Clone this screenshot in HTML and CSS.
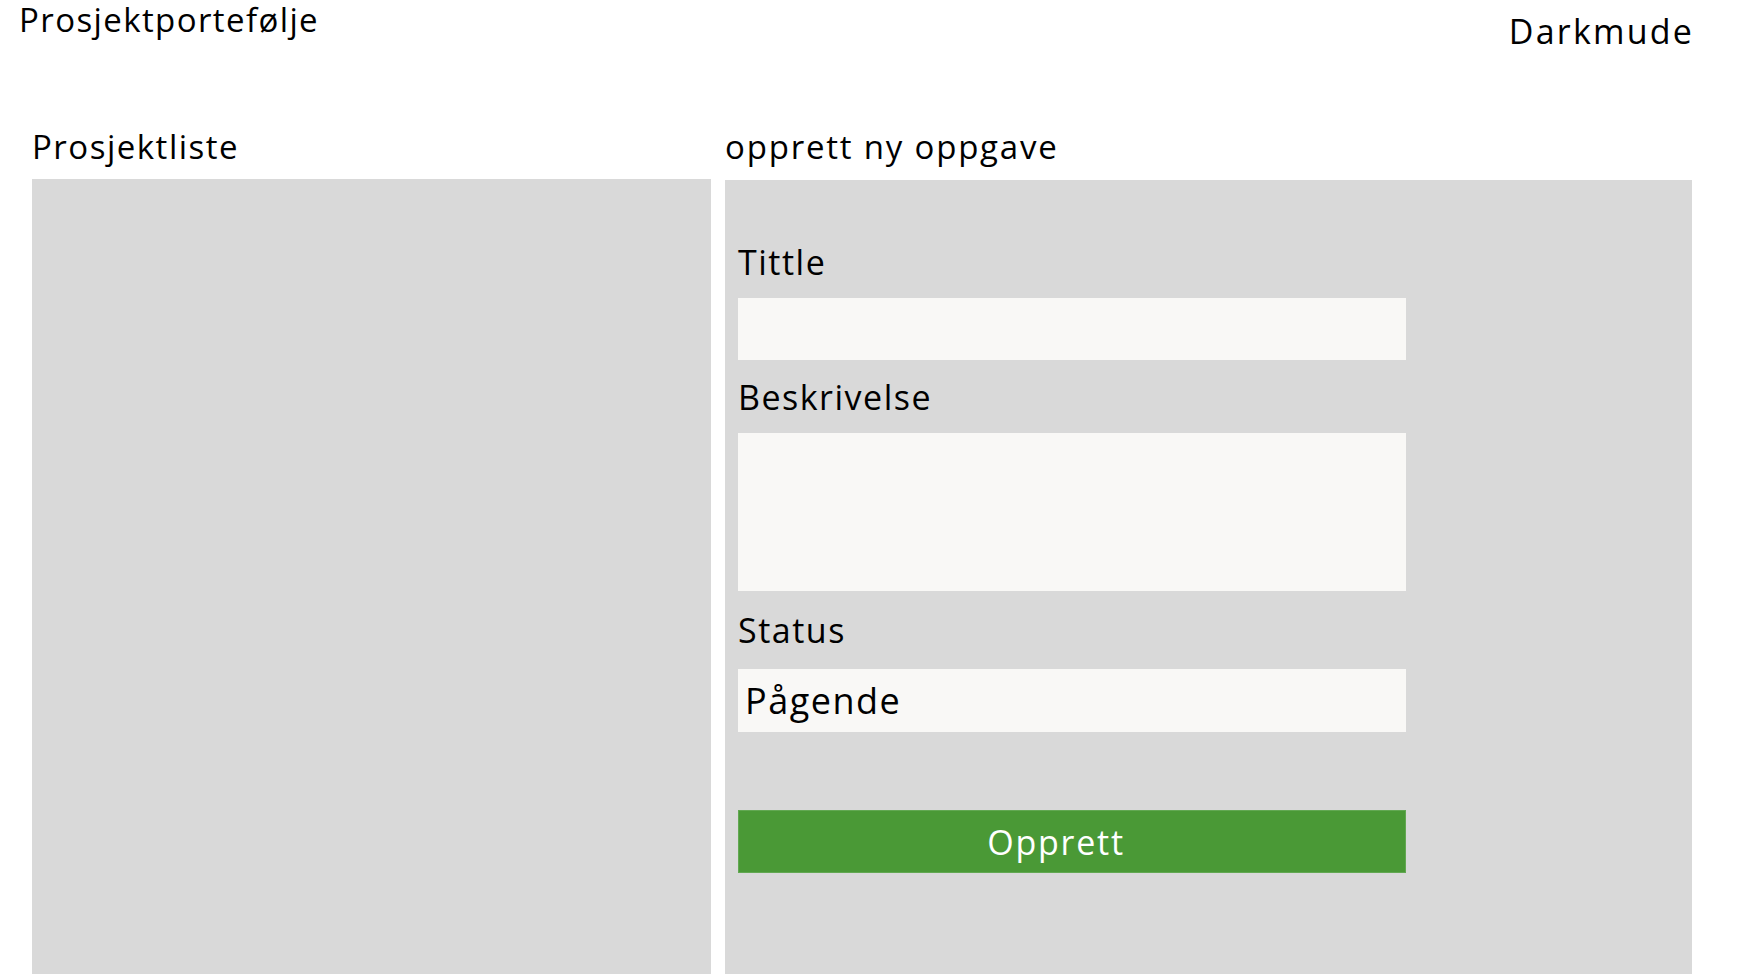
FILE: index.html
```html
<!DOCTYPE html>
<html lang="no">
<head>
<meta charset="utf-8">
<title>Prosjektportefølje</title>
<link rel="stylesheet" href="styles.css">
</head>
<body>
<header class="topbar">
  <h1 class="app-title">Prosjektportefølje</h1>
  <button class="mode-toggle" type="button">Darkmude</button>
</header>
<main class="workspace">
  <section class="column column-list">
    <h2 class="column-heading">Prosjektliste</h2>
    <div class="panel"></div>
  </section>
  <section class="column column-form">
    <h2 class="column-heading column-heading-form">opprett ny oppgave</h2>
    <div class="panel panel-form">
      <form class="task-form">
        <div class="field">
          <label class="field-label" for="tittle">Tittle</label>
          <input class="field-input" id="tittle" type="text">
        </div>
        <div class="field">
          <label class="field-label" for="beskrivelse">Beskrivelse</label>
          <textarea class="field-input field-textarea" id="beskrivelse"></textarea>
        </div>
        <div class="field field-status">
          <label class="field-label" for="status">Status</label>
          <select class="field-input field-select" id="status">
            <option>Pågende</option>
          </select>
        </div>
        <button class="submit-button" type="button">Opprett</button>
      </form>
    </div>
  </section>
</main>
</body>
</html>
```

FILE: styles.css
```css
html, body {
  margin: 0;
  height: 100%;
}

body {
  display: flex;
  flex-direction: column;
  overflow: hidden;
  background: #ffffff;
  color: #000000;
  font-family: "Open Sans", "Noto Sans", sans-serif;
}

.topbar {
  display: flex;
  justify-content: space-between;
  align-items: flex-start;
  padding: 0 44px 0 19px;
}

.app-title {
  margin: 0;
  font-size: 33px;
  line-height: 40px;
  font-weight: 400;
  letter-spacing: 1.4px;
}

.mode-toggle {
  margin: 11px 0 0;
  padding: 0;
  border: none;
  background: none;
  color: #000000;
  font-family: inherit;
  font-size: 34px;
  line-height: 40px;
  letter-spacing: 2.2px;
  cursor: pointer;
}

.workspace {
  flex: 1;
  display: grid;
  grid-template-columns: 679fr 967fr;
  column-gap: 14px;
  margin-top: 74px;
  padding: 0 46px 0 32px;
  min-height: 0;
}

.column {
  display: flex;
  flex-direction: column;
  min-height: 0;
}

.column-heading {
  margin: 2px 0 12px;
  font-size: 33px;
  line-height: 40px;
  font-weight: 400;
  letter-spacing: 1.5px;
}

.column-heading-form {
  margin: 2px 0 13px;
  letter-spacing: 1.8px;
}

.panel {
  flex: 1;
  background: #d9d9d9;
}

.panel-form {
  padding: 62px 13px 0;
}

.task-form {
  display: flex;
  flex-direction: column;
  gap: 17px;
  width: 668px;
}

.field {
  display: flex;
  flex-direction: column;
  gap: 16px;
}

.field-status {
  margin-top: 2px;
  gap: 19px;
}

.field-label {
  font-size: 34px;
  line-height: 40px;
  letter-spacing: 1.5px;
}

.field-input {
  box-sizing: border-box;
  display: block;
  width: 100%;
  height: 62px;
  margin: 0;
  border: none;
  border-radius: 0;
  background: #f9f8f6;
  font-family: inherit;
  color: #000000;
  outline: none;
}

.field-textarea {
  height: 158px;
  resize: none;
}

.field-select {
  height: 63px;
  padding: 0 0 0 7px;
  appearance: none;
  -webkit-appearance: none;
  font-size: 36px;
  letter-spacing: 1.5px;
}

.submit-button {
  box-sizing: border-box;
  height: 63px;
  margin-top: 61px;
  padding: 0 32px 0 0;
  border: 1px solid #62a852;
  background: #4a9936;
  color: #ffffff;
  font-family: inherit;
  font-size: 34px;
  letter-spacing: 1.75px;
  cursor: pointer;
}
```
